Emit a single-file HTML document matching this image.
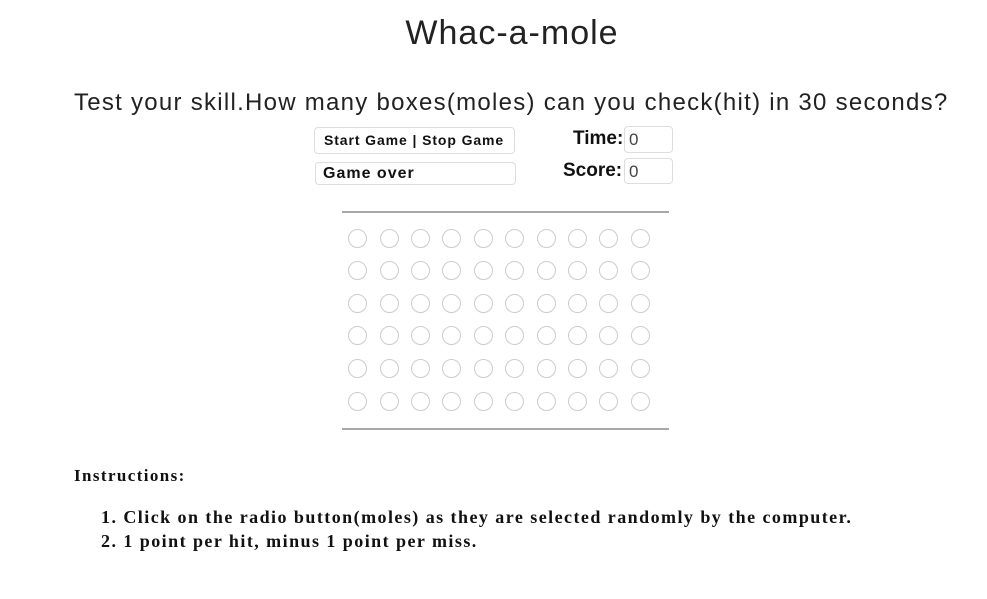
<!DOCTYPE html>
<html><head><style>
body{margin:0;width:987px;height:599px;background:#fff;position:relative;font-family:"Liberation Sans",sans-serif;color:#111;overflow:hidden}
.a{position:absolute;white-space:nowrap}
.box{position:absolute;border:1px solid #ddd;border-radius:4px;background:#fff;box-sizing:border-box}
.c{position:absolute;width:19px;height:19px;border:1.5px solid #ccc;border-radius:50%;box-sizing:border-box}
.hr{position:absolute;left:342px;width:327px;height:2px;background:#a8a8a8}
.serif{font-family:"Liberation Serif",serif;font-weight:bold}
</style></head><body>
<div class="a" style="left:0;width:1024px;text-align:center;top:14px;font-size:34px;letter-spacing:1px;color:#222">Whac-a-mole</div>
<div class="a" style="left:74px;top:89px;font-size:24px;letter-spacing:1.27px;color:#222">Test your skill.How many boxes(moles) can you check(hit) in 30 seconds?</div>
<div class="box" style="left:314px;top:127px;width:201px;height:27px"></div>
<div class="a" style="left:324px;top:132px;font-size:14px;font-weight:bold;letter-spacing:0.9px">Start Game | Stop Game</div>
<div class="box" style="left:315px;top:162px;width:201px;height:23px"></div>
<div class="a" style="left:323px;top:165px;font-size:16px;font-weight:bold;letter-spacing:1px">Game over</div>
<div class="a" style="left:573px;top:128px;font-size:19px;font-weight:bold">Time:</div>
<div class="box" style="left:624px;top:126px;width:49px;height:27px"></div>
<div class="a" style="left:629px;top:130px;font-size:17px;color:#444">0</div>
<div class="a" style="left:563px;top:160px;font-size:19px;font-weight:bold">Score:</div>
<div class="box" style="left:624px;top:158px;width:49px;height:26px"></div>
<div class="a" style="left:629px;top:162px;font-size:17px;color:#444">0</div>
<div class="hr" style="top:211px"></div>
<div class="hr" style="top:428px"></div>
<div id="g"></div>
<div class="a serif" style="left:74px;top:466px;font-size:17px;letter-spacing:1.4px">Instructions:</div>
<div class="a serif" style="left:101px;top:505px;font-size:18px;line-height:24px;letter-spacing:1.45px">1. Click on the radio button(moles) as they are selected randomly by the computer.<br>2. 1 point per hit, minus 1 point per miss.</div>
<script>
var xs=[357,389,420,451,483,514,546,577,608,640],ys=[238,270,303,335,368,401],h='';
ys.forEach(function(y){xs.forEach(function(x){h+='<div class="c" style="left:'+(x-9.5)+'px;top:'+(y-9.5)+'px"></div>'})});
document.getElementById('g').innerHTML=h;
</script>
</body></html>
